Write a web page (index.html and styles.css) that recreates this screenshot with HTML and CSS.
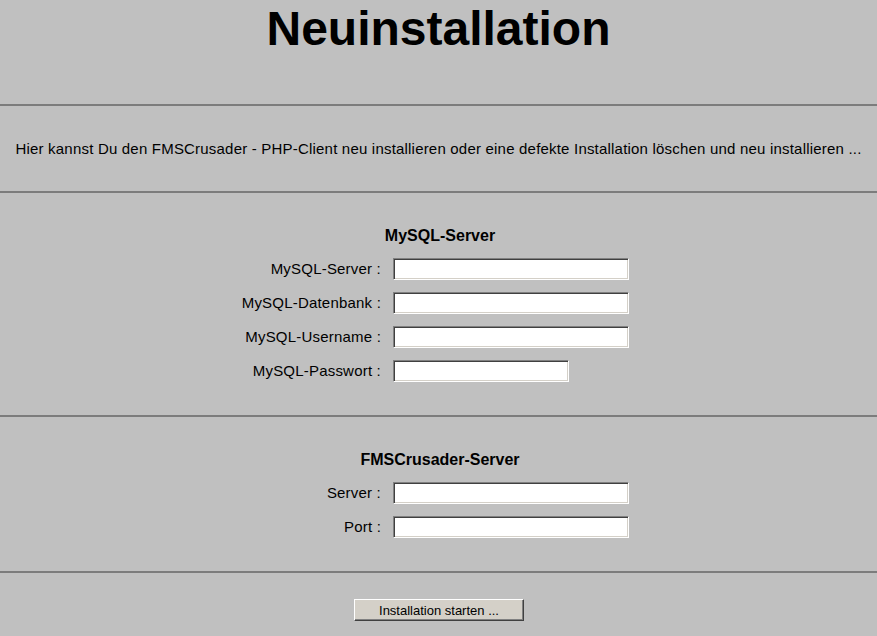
FILE: index.html
```html
<!DOCTYPE html>
<html lang="de">
<head>
<meta charset="utf-8">
<title>Neuinstallation</title>
<link rel="stylesheet" href="styles.css">
</head>
<body>
<h1 class="title">Neuinstallation</h1>
<hr class="rule">
<section class="intro">
  <p>Hier kannst Du den FMSCrusader - PHP-Client neu installieren oder eine defekte Installation löschen und neu installieren ...</p>
</section>
<hr class="rule">
<section class="block">
  <h2 class="block-title">MySQL-Server</h2>
  <div class="form">
    <label class="lbl" for="f1">MySQL-Server :</label><input class="field" id="f1" type="text">
    <label class="lbl" for="f2">MySQL-Datenbank :</label><input class="field" id="f2" type="text">
    <label class="lbl" for="f3">MySQL-Username :</label><input class="field" id="f3" type="text">
    <label class="lbl" for="f4">MySQL-Passwort :</label><input class="field field-short" id="f4" type="password">
  </div>
</section>
<hr class="rule">
<section class="block">
  <h2 class="block-title">FMSCrusader-Server</h2>
  <div class="form">
    <label class="lbl" for="f5">Server :</label><input class="field" id="f5" type="text">
    <label class="lbl" for="f6">Port :</label><input class="field" id="f6" type="text">
  </div>
</section>
<hr class="rule">
<section class="actions">
  <button class="btn" type="button">Installation starten ...</button>
</section>
</body>
</html>
```
FILE: styles.css
```css
html, body {
  margin: 0;
  padding: 0;
}
body {
  background: #c0c0c0;
  color: #000;
  font-family: "Liberation Sans", Arial, sans-serif;
  font-size: 15px;
  letter-spacing: 0.2px;
  height: 636px;
  overflow: hidden;
}
.title {
  margin: 0;
  padding-top: 1px;
  font-size: 48px;
  font-weight: bold;
  letter-spacing: 0;
  line-height: 56px;
  text-align: center;
  height: 103px;
}
.rule {
  margin: 0;
  border: 0;
  border-top: 2px solid #7c7c7c;
  height: 0;
}
.intro {
  height: 85px;
  display: flex;
  align-items: center;
  justify-content: center;
}
.intro p {
  margin: 0;
  line-height: 18px;
}
.block {
  padding: 33px 0 33px;
}
.block-title {
  margin: 0 0 12px;
  font-size: 16px;
  font-weight: bold;
  letter-spacing: 0;
  line-height: 20px;
  text-align: center;
  padding-left: 3px;
}
.form {
  display: grid;
  grid-template-columns: 381px auto;
  column-gap: 12px;
  row-gap: 12px;
  align-items: center;
}
.lbl {
  text-align: right;
  line-height: 22px;
}
.field {
  box-sizing: border-box;
  width: 236px;
  height: 22px;
  margin: 0;
  padding: 1px 3px;
  background: #fff;
  border: 1px solid;
  border-color: #808080 #fff #fff #808080;
  box-shadow: inset 1px 1px 0 #404040, inset -1px -1px 0 #d4d0c8;
  font: 13px "Liberation Sans", Arial, sans-serif;
}
.field-short {
  width: 176px;
}
.actions {
  padding-top: 26px;
  display: flex;
  justify-content: center;
}
.btn {
  box-sizing: border-box;
  width: 170px;
  height: 22px;
  margin: 0 0 0 1px;
  padding: 0;
  background: #d4d0c8;
  color: #000;
  border: 1px solid;
  border-color: #fff #404040 #404040 #fff;
  box-shadow: inset -1px -1px 0 #808080;
  font: 13px "Liberation Sans", Arial, sans-serif;
  letter-spacing: 0;
}
```
